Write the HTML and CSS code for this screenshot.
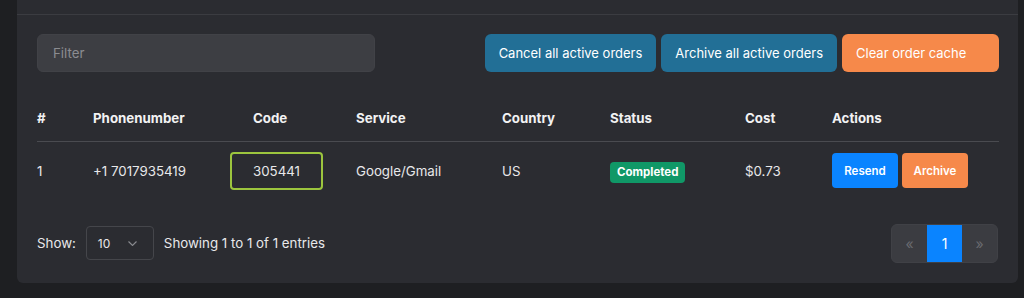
FILE: index.html
```html
<!DOCTYPE html>
<html lang="en">
<head>
  <meta charset="UTF-8">
  <meta name="viewport" content="width=device-width, initial-scale=1.0">
  <title>Orders</title>
  <link rel="stylesheet" href="styles.css">
</head>
<body>

<div class="card">
  <div class="card-header"></div>

  <div class="card-body">

    <!-- Filter and bulk actions -->
    <div class="toolbar">
      <input class="filter" type="text" placeholder="Filter">
      <div class="bulk-actions">
        <button class="btn btn-teal">Cancel all active orders</button>
        <button class="btn btn-teal">Archive all active orders</button>
        <button class="btn btn-orange btn-wide">Clear order cache</button>
      </div>
    </div>

    <!-- Orders table -->
    <table class="orders">
      <thead>
        <tr>
          <th class="col-num">#</th>
          <th class="col-phone">Phonenumber</th>
          <th class="col-code">Code</th>
          <th class="col-service">Service</th>
          <th class="col-country">Country</th>
          <th class="col-status">Status</th>
          <th class="col-cost">Cost</th>
          <th class="col-actions">Actions</th>
        </tr>
      </thead>
      <tbody>
        <tr>
          <td>1</td>
          <td>+1 7017935419</td>
          <td><div class="code-box">305441</div></td>
          <td>Google/Gmail</td>
          <td>US</td>
          <td><span class="badge">Completed</span></td>
          <td>$0.73</td>
          <td>
            <div class="row-actions">
              <button class="btn-sm btn-blue">Resend</button>
              <button class="btn-sm btn-orange">Archive</button>
            </div>
          </td>
        </tr>
      </tbody>
    </table>

    <!-- Footer with page size and pagination -->
    <div class="table-footer">
      <div class="page-size">
        <span>Show:</span>
        <div class="select">
          <span>10</span>
          <svg width="9" height="5" viewBox="0 0 9 5"><path d="M0.5 0.5l4 4 4-4" fill="none" stroke="#8a8b90" stroke-width="1.1"/></svg>
        </div>
        <span>Showing 1 to 1 of 1 entries</span>
      </div>
      <div class="pagination">
        <span class="page disabled">&laquo;</span>
        <span class="page active">1</span>
        <span class="page disabled">&raquo;</span>
      </div>
    </div>

  </div>
</div>

</body>
</html>
```

FILE: styles.css
```css
body {
  margin: 0;
  background-color: #1e1f22;
  font-family: Inter, "Noto Sans", sans-serif;
  font-size: 13.3px;
  color: #e8e8ea;
}

.card {
  margin-left: 17px;
  width: 1001px;
  background-color: #2b2c31;
  border-radius: 0 0 6px 6px;
}

.card-header {
  height: 14px;
  border-bottom: 1px solid #3b3c41;
}

.card-body {
  padding: 19px 19px 20px 20px;
}

/* Toolbar */
.toolbar {
  display: flex;
  justify-content: space-between;
  align-items: center;
}

.filter {
  width: 338px;
  height: 38px;
  box-sizing: border-box;
  padding: 0 15px;
  background-color: #3d3e43;
  border: 1px solid #414247;
  border-radius: 6px;
  font-family: inherit;
  font-size: 13.3px;
  color: #e8e8ea;
}

.filter::placeholder {
  color: #8b8c91;
}

.bulk-actions {
  display: flex;
  gap: 5px;
}

.btn {
  height: 38px;
  padding: 0 14px;
  border: none;
  border-radius: 6px;
  font-family: inherit;
  font-size: 13px;
  color: #ffffff;
}

.btn-wide {
  width: 157px;
  text-align: left;
}

.btn-teal {
  background-color: #226f96;
}

.btn-orange {
  background-color: #f6894a;
}

/* Table */
.orders {
  width: 100%;
  table-layout: fixed;
  border-collapse: collapse;
  margin-top: 24px;
}

.orders th {
  box-sizing: border-box;
  text-align: left;
  font-weight: 700;
  height: 45px;
  padding: 0;
  border-bottom: 1px solid #4a4b50;
  color: #f2f2f3;
}

.orders td {
  padding: 10px 0 11px 0;
  vertical-align: middle;
}

.col-num { width: 56px; }
.col-phone { width: 137px; }
.col-code { width: 126px; }
.orders th.col-code { padding-left: 23px; }
.col-service { width: 146px; }
.col-country { width: 108px; }
.col-status { width: 135px; }
.col-cost { width: 87px; }

.code-box {
  width: 93px;
  height: 38px;
  box-sizing: border-box;
  border: 2px solid #9cc53e;
  border-radius: 4px;
  display: flex;
  align-items: center;
  justify-content: center;
}

.badge {
  display: inline-block;
  margin-top: 4px;
  background-color: #109867;
  color: #ffffff;
  font-size: 11.5px;
  font-weight: 700;
  padding: 3px 7px 4px 7px;
  border-radius: 4px;
}

.row-actions {
  display: flex;
  gap: 4px;
}

.btn-sm {
  width: 66px;
  height: 35px;
  border: none;
  border-radius: 4px;
  font-family: inherit;
  font-size: 11.5px;
  font-weight: 600;
  color: #ffffff;
}

.btn-blue {
  background-color: #0a84ff;
}

/* Footer */
.table-footer {
  display: flex;
  justify-content: space-between;
  align-items: center;
  margin-top: 23px;
  padding-right: 1px;
}

.page-size {
  display: flex;
  align-items: center;
  gap: 10px;
}

.select {
  width: 68px;
  height: 34px;
  box-sizing: border-box;
  border: 1px solid #45464b;
  border-radius: 4px;
  display: flex;
  align-items: center;
  justify-content: space-between;
  padding: 0 16px 0 11px;
  font-size: 12px;
}

.pagination {
  display: flex;
  background-color: #3b3c41;
  border: 1px solid #404146;
  border-radius: 6px;
  overflow: hidden;
}

.page {
  width: 35px;
  height: 37px;
  display: flex;
  align-items: center;
  justify-content: center;
  font-size: 14px;
}

.page.disabled {
  color: #6a6b70;
}

.page.active {
  background-color: #0a84ff;
  color: #ffffff;
}
```
